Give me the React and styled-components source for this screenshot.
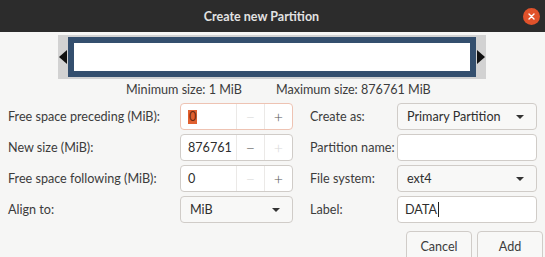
import React from "react";
import styled, { createGlobalStyle } from "styled-components";

const Global = createGlobalStyle`
  html, body { margin: 0; padding: 0; background: #f6f6f5; }
  body { font-family: Lato, "Noto Sans", sans-serif; }
`;

const Window = styled.div`
  width: 545px;
  height: 257px;
  overflow: hidden;
  background: #f6f6f5;
  color: #3c3c3c;
  font-family: Lato, "Noto Sans", sans-serif;
  font-size: 12.6px;
`;

const TitleBar = styled.div`
  height: 32px;
  background: #2c2c2c;
  display: flex;
  align-items: center;
  justify-content: center;
  position: relative;
  padding-right: 22px;
  box-sizing: border-box;
`;

const Title = styled.div`
  color: #e2e2e2;
  font-weight: 700;
  font-size: 12.5px;
`;

const CloseBtn = styled.div`
  position: absolute;
  right: 5px;
  top: 8px;
  width: 17px;
  height: 17px;
  border-radius: 50%;
  background: #e0522b;
  display: flex;
  align-items: center;
  justify-content: center;
`;

const Body = styled.div`
  padding: 3px 2px 0 8px;
`;

const BarWrap = styled.div`
  margin-left: 50px;
  width: 428px;
  height: 44px;
  background: #d2d2d2;
  display: flex;
  align-items: center;
`;

const Arrow = styled.div`
  width: 0;
  height: 0;
  border-top: 7px solid transparent;
  border-bottom: 7px solid transparent;
  ${(p) => (p.$dir === "left" ? "border-right: 8px solid #111;" : "border-left: 8px solid #111;")}
  margin: 0 1px;
`;

const PartitionBox = styled.div`
  flex: 1;
  height: 40px;
  box-sizing: border-box;
  border: 6px solid #344f6e;
  background: #fff;
`;

const SizeInfo = styled.div`
  display: flex;
  padding-left: 118px;
  gap: 34px;
  height: 20px;
  align-items: center;
  margin-top: 0;
`;

const Form = styled.div`
  display: grid;
  grid-template-columns: 172px 113px 17px 87px 140px;
  grid-auto-rows: 27px;
  row-gap: 4px;
  margin-top: 4px;
`;

const Label = styled.div`
  display: flex;
  align-items: center;
  white-space: nowrap;
  grid-column: ${(p) => p.$col};
`;

const Field = styled.div`
  grid-column: ${(p) => p.$col};
  box-sizing: border-box;
  border: 1px solid ${(p) => (p.$focus ? "#eec3b3" : "#d0ccc8")};
  border-radius: 4px;
  background: ${(p) => (p.$button ? "#f8f8f7" : "#fff")};
  display: flex;
  align-items: center;
  overflow: hidden;
`;

const Value = styled.div`
  flex: 1;
  padding-left: ${(p) => p.$pad || 8}px;
  display: flex;
  align-items: center;
  color: #2e2e2e;
  white-space: nowrap;
`;

const Selected = styled.span`
  background: #e0602f;
  color: #6b2a12;
  padding: 0 1px;
  line-height: 14px;
`;

const Caret = styled.span`
  display: inline-block;
  width: 1px;
  height: 15px;
  background: #222;
  margin-left: 1px;
`;

const SpinBtn = styled.div`
  width: 27px;
  align-self: stretch;
  border-left: 1px solid #ebe9e7;
  display: flex;
  align-items: center;
  justify-content: center;
  color: ${(p) => (p.$disabled ? "#d8d8d8" : "#555")};
  font-size: 16px;
  font-weight: 300;
`;

const DropArrow = styled.div`
  width: 0;
  height: 0;
  border-left: 4px solid transparent;
  border-right: 4px solid transparent;
  border-top: 4px solid #333;
  margin-right: 12px;
`;

const Buttons = styled.div`
  display: flex;
  justify-content: flex-end;
  gap: 5px;
  margin-top: 8px;
`;

const Button = styled.div`
  width: 66px;
  height: 30px;
  box-sizing: border-box;
  border: 1px solid #d0ccc8;
  border-radius: 4px;
  background: #f8f8f7;
  display: flex;
  align-items: center;
  justify-content: center;
  color: #3c3c3c;
`;

function Spin({ value, focus, minusDisabled, plusDisabled, selected }) {
  return (
    <Field $col={2} $focus={focus}>
      <Value $pad={7}>
        {selected ? <Selected>{value}</Selected> : value}
      </Value>
      <SpinBtn $disabled={minusDisabled}>−</SpinBtn>
      <SpinBtn $disabled={plusDisabled}>+</SpinBtn>
    </Field>
  );
}

function Combo({ col, value }) {
  return (
    <Field $col={col} $button>
      <Value $pad={9}>{value}</Value>
      <DropArrow />
    </Field>
  );
}

export default function App() {
  return (
    <Window>
      <Global />
      <TitleBar>
        <Title>Create new Partition</Title>
        <CloseBtn>
          <svg width="7" height="7" viewBox="0 0 7 7">
            <path d="M1 1L6 6M6 1L1 6" stroke="#fff" strokeWidth="1.4" strokeLinecap="round" />
          </svg>
        </CloseBtn>
      </TitleBar>
      <Body>
        <BarWrap>
          <Arrow $dir="left" />
          <PartitionBox />
          <Arrow $dir="right" />
        </BarWrap>
        <SizeInfo>
          <span>Minimum size: 1 MiB</span>
          <span>Maximum size: 876761 MiB</span>
        </SizeInfo>
        <Form>
          <Label $col={1}>Free space preceding (MiB):</Label>
          <Spin value="0" focus selected minusDisabled />
          <Label $col={4}>Create as:</Label>
          <Combo col={5} value="Primary Partition" />

          <Label $col={1}>New size (MiB):</Label>
          <Spin value="876761" plusDisabled />
          <Label $col={4}>Partition name:</Label>
          <Field $col={5} />

          <Label $col={1}>Free space following (MiB):</Label>
          <Spin value="0" minusDisabled />
          <Label $col={4}>File system:</Label>
          <Combo col={5} value="ext4" />

          <Label $col={1}>Align to:</Label>
          <Combo col={2} value="MiB" />
          <Label $col={4}>Label:</Label>
          <Field $col={5}>
            <Value $pad={7}>
              DATA<Caret />
            </Value>
          </Field>
        </Form>
        <Buttons>
          <Button>Cancel</Button>
          <Button>Add</Button>
        </Buttons>
      </Body>
    </Window>
  );
}
